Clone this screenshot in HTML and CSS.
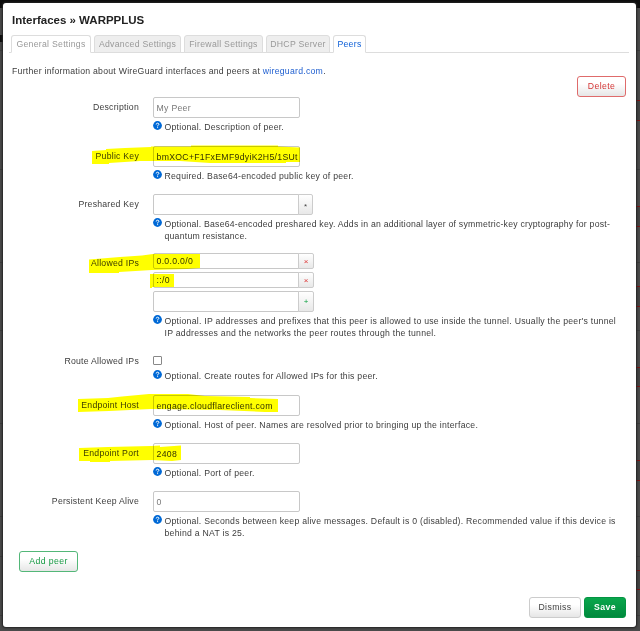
FILE: index.html
```html
<!DOCTYPE html>
<html lang="en">
<head>
<meta charset="utf-8">
<title>Interfaces » WARPPLUS</title>
<link rel="stylesheet" href="styles.css">
</head>
<body>
<svg class="backdrop" width="640" height="631" viewBox="0 0 640 631" aria-hidden="true">
  <rect width="640" height="631" fill="#4a4a4a"/>
  <rect width="640" height="8" fill="#0c0c0c"/>
  <rect y="35" width="3" height="7" fill="#0c0c0c"/>
  <path d="M0 50.5H640M0 169.5H640M0 262.5H640M0 330.5H640M0 423.5H640M0 516.5H640M0 556.5H640M0 615.5H640" stroke="#3d3d3d"/>
  <g fill="#434343" stroke="#7e1515"><path d="M630 100.5h12v20h-12zM630 206.5h12v20h-12zM630 286.5h12v20h-12zM630 367.5h12v19h-12zM630 460.5h12v20h-12zM630 570.5h12v19h-12z"/></g>
</svg>
<main class="modal">
  <h1>Interfaces » WARPPLUS</h1>
  <nav class="tabs">
    <a class="tab first">General Settings</a>
    <a class="tab muted advanced">Advanced Settings</a>
    <a class="tab muted firewall">Firewall Settings</a>
    <a class="tab muted dhcp">DHCP Server</a>
    <a class="tab active">Peers</a>
  </nav>
  <p class="intro">Further information about WireGuard interfaces and peers at <a>wireguard.com</a>.</p>
  <div class="delete-row"><button class="btn negative">Delete</button></div>
  <section class="form">
    <div class="row description">
      <label>Description</label>
      <div class="field"><div class="input placeholder">My Peer</div>
        <div class="help"><svg class="q" viewBox="0 0 9 9"><circle cx="4.5" cy="4.5" r="4.4"/><path d="M3.2 3.5Q3.3 2.2 4.6 2.2T5.9 3.4Q5.9 4.1 4.6 4.7V5.4M4.6 6.2V7.1"/></svg><span>Optional. Description of peer.</span></div></div>
    </div>
    <div class="row public">
      <label>Public Key</label>
      <div class="field"><div class="input">bmXOC+F1FxEMF9dyiK2H5/1SUt</div>
        <div class="help"><svg class="q" viewBox="0 0 9 9"><circle cx="4.5" cy="4.5" r="4.4"/><path d="M3.2 3.5Q3.3 2.2 4.6 2.2T5.9 3.4Q5.9 4.1 4.6 4.7V5.4M4.6 6.2V7.1"/></svg><span>Required. Base64-encoded public key of peer.</span></div></div>
    </div>
    <div class="row preshared">
      <label>Preshared Key</label>
      <div class="field"><div class="group"><div class="input"></div><button class="addon reveal">*</button></div>
        <div class="help"><svg class="q" viewBox="0 0 9 9"><circle cx="4.5" cy="4.5" r="4.4"/><path d="M3.2 3.5Q3.3 2.2 4.6 2.2T5.9 3.4Q5.9 4.1 4.6 4.7V5.4M4.6 6.2V7.1"/></svg><span>Optional. Base64-encoded preshared key. Adds in an additional layer of symmetric-key cryptography for post-<br>quantum resistance.</span></div></div>
    </div>
    <div class="row allowed">
      <label>Allowed IPs</label>
      <div class="field">
        <div class="group item"><div class="input">0.0.0.0/0</div><button class="addon remove">×</button></div>
        <div class="group item"><div class="input">::/0</div><button class="addon remove">×</button></div>
        <div class="group new"><div class="input"></div><button class="addon add">+</button></div>
        <div class="help"><svg class="q" viewBox="0 0 9 9"><circle cx="4.5" cy="4.5" r="4.4"/><path d="M3.2 3.5Q3.3 2.2 4.6 2.2T5.9 3.4Q5.9 4.1 4.6 4.7V5.4M4.6 6.2V7.1"/></svg><span>Optional. IP addresses and prefixes that this peer is allowed to use inside the tunnel. Usually the peer's tunnel<br>IP addresses and the networks the peer routes through the tunnel.</span></div></div>
    </div>
    <div class="row route">
      <label>Route Allowed IPs</label>
      <div class="field"><div class="check"></div>
        <div class="help"><svg class="q" viewBox="0 0 9 9"><circle cx="4.5" cy="4.5" r="4.4"/><path d="M3.2 3.5Q3.3 2.2 4.6 2.2T5.9 3.4Q5.9 4.1 4.6 4.7V5.4M4.6 6.2V7.1"/></svg><span>Optional. Create routes for Allowed IPs for this peer.</span></div></div>
    </div>
    <div class="row host">
      <label>Endpoint Host</label>
      <div class="field"><div class="input">engage.cloudflareclient.com</div>
        <div class="help"><svg class="q" viewBox="0 0 9 9"><circle cx="4.5" cy="4.5" r="4.4"/><path d="M3.2 3.5Q3.3 2.2 4.6 2.2T5.9 3.4Q5.9 4.1 4.6 4.7V5.4M4.6 6.2V7.1"/></svg><span>Optional. Host of peer. Names are resolved prior to bringing up the interface.</span></div></div>
    </div>
    <div class="row port">
      <label>Endpoint Port</label>
      <div class="field"><div class="input">2408</div>
        <div class="help"><svg class="q" viewBox="0 0 9 9"><circle cx="4.5" cy="4.5" r="4.4"/><path d="M3.2 3.5Q3.3 2.2 4.6 2.2T5.9 3.4Q5.9 4.1 4.6 4.7V5.4M4.6 6.2V7.1"/></svg><span>Optional. Port of peer.</span></div></div>
    </div>
    <div class="row alive">
      <label>Persistent Keep Alive</label>
      <div class="field"><div class="input placeholder">0</div>
        <div class="help"><svg class="q" viewBox="0 0 9 9"><circle cx="4.5" cy="4.5" r="4.4"/><path d="M3.2 3.5Q3.3 2.2 4.6 2.2T5.9 3.4Q5.9 4.1 4.6 4.7V5.4M4.6 6.2V7.1"/></svg><span>Optional. Seconds between keep alive messages. Default is 0 (disabled). Recommended value if this device is<br>behind a NAT is 25.</span></div></div>
    </div>
  </section>
  <button class="btn positive add-peer">Add peer</button>
  <footer><button class="btn dismiss">Dismiss</button><button class="btn save">Save</button></footer>
</main>
<svg class="marker" width="640" height="631" viewBox="0 0 640 631" aria-hidden="true">
  <path d="M92 151L106 150V149L125 148L151 147V146.500H191V145.500H278V146.500L300 147.500V162H286V163H210L180 161H140L109 163V164H92z"/>
  <path d="M89 259.500L120 257L142 255.500L153 254H200V268L187 269L152 270L119 272V273H89z"/>
  <path d="M150 274H174V287H152V288H150z"/>
  <path d="M78 399L108 398L122 396.500L149 394H188L205 396L250 397V398L278 399V412L265 412L220 410L151 409L109 411L78 412z"/>
  <path d="M79 448L108 447L151 446L160 445.500V447L181 445.500V460L172 461L152 460L110 461V462H90V461H79z"/>
</svg>
</body>
</html>
```
FILE: styles.css
```css
* { box-sizing: border-box; }
body {
  margin: 0;
  height: 631px;
  overflow: hidden;
  position: relative;
  background: #4a4a4a;
  font: 8.7px/11.5px "Liberation Sans", Arial, sans-serif;
  letter-spacing: .24px;
  color: #3c3c3c;
}
.backdrop, .marker { position: absolute; top: 0; left: 0; }
.marker { fill: #ff0; mix-blend-mode: multiply; pointer-events: none; }
.modal {
  position: relative;
  display: flex;
  flex-direction: column;
  width: 633px;
  height: 624px;
  margin: 0 0 0 3px;
  top: 3px;
  padding: 9px 7px 9px 6px;
  background: #fff;
  border-radius: 3px;
  box-shadow: 0 0 2px 1px #222;
}
h1 { margin: 0 0 0 3px; font-size: 11.5px; line-height: 16px; height: 23px; letter-spacing: 0; color: #222; font-weight: 700; }
.tabs { display: flex; gap: 3px; height: 18px; padding-left: 2px; border-bottom: 1px solid #ddd; }
.tab {
  height: 18px;
  width: 80px;
  border: 1px solid #ddd;
  border-bottom-color: #fff;
  border-radius: 3px 3px 0 0;
  line-height: 16px;
  text-align: center;
  white-space: nowrap;
  letter-spacing: .28px;
  color: #999;
}
.tab.muted { background: #eee; border-bottom-color: #ddd; }
.tab.advanced { width: 87px; }
.tab.firewall { width: 79px; }
.tab.dhcp { width: 64px; }
.tab.active { width: 33px; color: #0b5ed7; }
.intro { margin: 13px 0 0 3px; height: 10px; white-space: nowrap; letter-spacing: .26px; }
.intro a { color: #1f5fd0; }
.delete-row { display: flex; justify-content: flex-end; height: 21px; padding-right: 3px; }
.btn {
  height: 21px;
  padding: 0;
  border: 1px solid #ccc;
  border-radius: 3px;
  background: linear-gradient(#fff, #fff 35%, #e6e6e6);
  font: inherit;
  letter-spacing: .4px;
  color: #444;
}
.btn.negative { width: 49px; border-color: #df6b6b; color: #d43434; }
.form { display: grid; grid-template-rows: 49px 48px 59px 103px 39px 48px 48px 60px; }
.row { display: grid; grid-template-columns: 130px 1fr; column-gap: 14px; }
label { text-align: right; padding-top: 5px; white-space: nowrap; }
.input {
  width: 147px;
  height: 21px;
  border: 1px solid #c8c8c8;
  border-radius: 2px;
  padding: 1px 0 0 2.5px;
  line-height: 19px;
  letter-spacing: .3px;
  color: #333;
  white-space: nowrap;
  overflow: hidden;
}
.placeholder { color: #777; }
.help { display: flex; gap: 2.5px; margin-top: 3px; white-space: nowrap; letter-spacing: .25px; }
.help span { padding-top: 1px; }
.q { width: 9px; height: 9px; flex: none; fill: #0069d6; }
.q path { fill: none; stroke: #fff; stroke-width: 1; }
.group { display: flex; }
.group .input { border-radius: 2px 0 0 2px; width: 146px; }
.addon {
  width: 15px;
  margin-left: -1px;
  padding: 0;
  border: 1px solid #ccc;
  border-radius: 0 2px 2px 0;
  background: linear-gradient(#fff, #e8e8e8);
  font: 8px "Liberation Sans", Arial, sans-serif;
  color: #444;
}
.reveal { padding-top: 3px; }
.item { height: 19px; padding-bottom: 3px; }
.item .input { height: 16px; line-height: 13px; }
.item .addon, .new .addon { width: 16px; }
.remove { color: #d33; }
.add { color: #0a9f3e; }
.check { width: 9px; height: 9px; border: 1px solid #888; border-radius: 1px; background: #fff; }
.route label { padding-top: 0; }
.route .help { margin-top: 5px; }
.allowed .help { letter-spacing: .26px; }
.preshared .help { letter-spacing: .23px; }
.add-peer { margin-left: 10px; width: 59px; border-color: #53b778; color: #179a44; flex: none; }
footer { display: flex; justify-content: flex-end; gap: 3px; margin-top: auto; padding-right: 3px; }
.dismiss { width: 52px; }
.save { width: 42px; border-color: #049442; background: linear-gradient(#0aa64c, #008a3d); color: #fff; font-weight: 700; }
```
